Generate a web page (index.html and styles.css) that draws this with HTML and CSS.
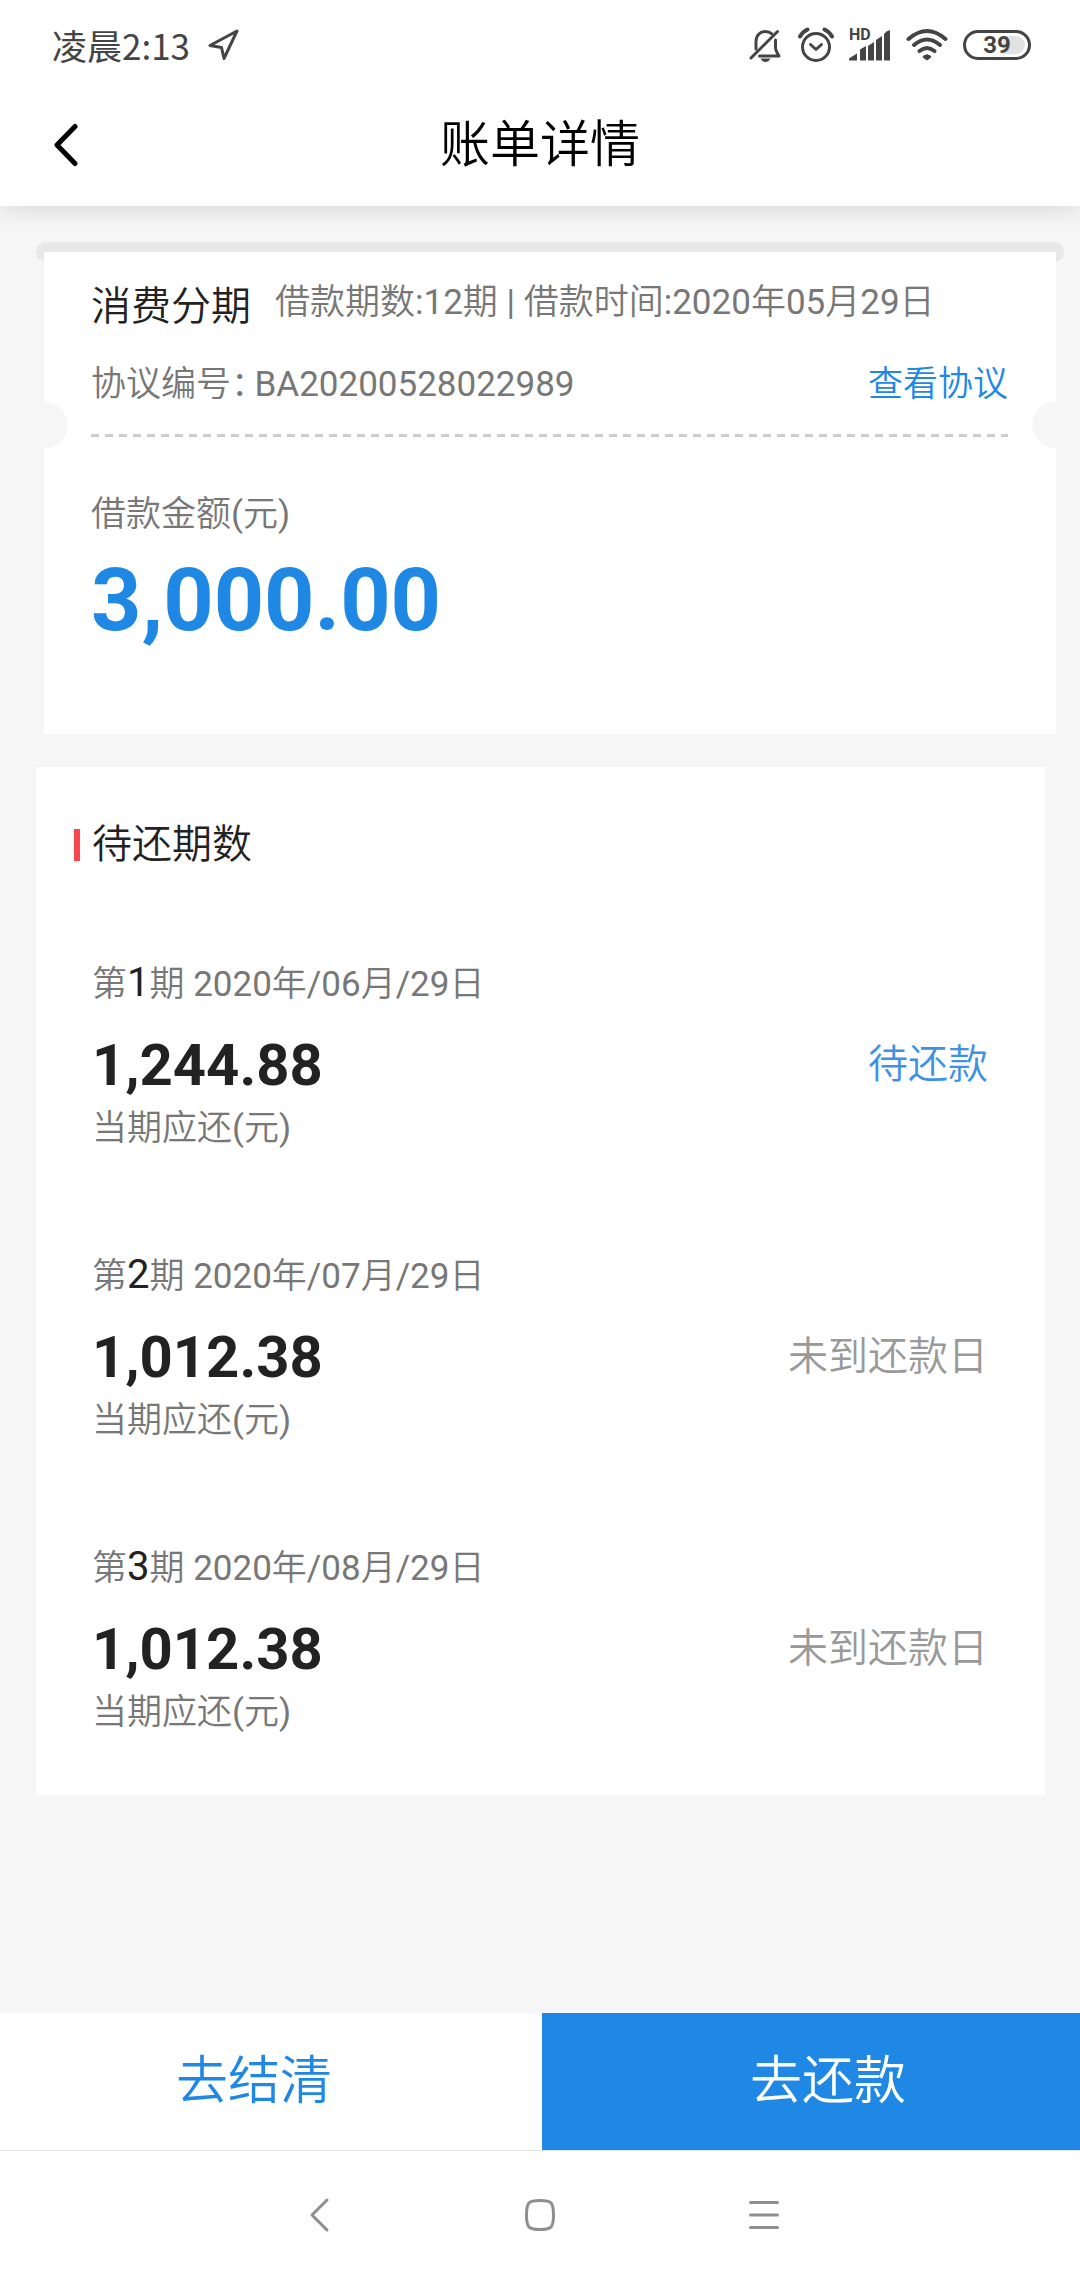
FILE: index.html
```html
<!DOCTYPE html>
<html lang="zh-CN">
<head>
<meta charset="utf-8">
<meta name="viewport" content="width=device-width, initial-scale=1">
<title>账单详情</title>
<link rel="stylesheet" href="styles.css">
</head>
<body>
<header class="header">
  <div class="status-bar">
    <div class="status-left">
      <span class="clock">凌晨2:13</span>
      <svg class="icon" width="32" height="32" viewBox="0 0 32 32" fill="none" stroke="#444" stroke-width="3" stroke-linejoin="round"><path d="M29 2 2 16.500 13.500 18.500 16 29.500Z"/></svg>
    </div>
    <div class="status-right">
      <svg class="icon" width="34" height="36" viewBox="0 0 34 36" fill="none" stroke="#444" stroke-width="3" stroke-linecap="round" stroke-linejoin="round">
        <path d="M7 22V14.500C7 8.500 11 4.500 16.500 4.500c2.500 0 4.500.800 6 2.200"/><path d="M26.500 13v7.500c0 3 1 4.500 3.500 8.500H10.500"/><path d="M2 31 28.500 4.500"/><path d="M11.500 31.500h10q-2 3.500-5 3.500t-5-3.500Z" fill="#444" stroke="none"/>
      </svg>
      <svg class="icon" width="36" height="36" viewBox="0 0 36 36" fill="none" stroke="#444" stroke-width="3" stroke-linecap="round" stroke-linejoin="round">
        <circle cx="18" cy="20" r="13.500"/><path d="M12.500 17.500 18 22.500 23.500 17.500"/><path d="M2 9.500Q5 4.500 9.500 2.500" stroke-width="4"/><path d="M34 9.500Q31 4.500 26.500 2.500" stroke-width="4"/>
      </svg>
      <div class="signal">
        <span class="signal-hd">HD</span>
        <svg class="icon" width="42" height="36" viewBox="0 0 42 36" fill="#444"><path d="M0 33.500v-2l8-5v7Z"/><path d="M11 33.500V22.500l6-3.500v14.500Z"/><path d="M19 33.500V19l6-4v18.500Z"/><path d="M27 33.500V13l6-4v24.500Z"/><path d="M35 33.500V7q2-3 6-4v30.500Z"/></svg>
      </div>
      <svg class="icon" width="42" height="34" viewBox="0 0 42 34" fill="none" stroke="#444" stroke-width="4" stroke-linecap="round"><path d="M2.500 11Q21-5 39.500 11"/><path d="M8 17Q21 6 34 17"/><path d="M13.500 23Q21 17 28.500 23"/><path d="M17.500 28q3.500-2.500 7 0v1.500L21 32l-3.500-2.500Z" fill="#444" stroke-width="1"/></svg>
      <div class="battery">39</div>
    </div>
  </div>
  <div class="title-bar">
    <button class="back" type="button" aria-label="返回"><svg class="icon" width="26" height="44" viewBox="0 0 26 44" fill="none" stroke="#000" stroke-width="5" stroke-linecap="round" stroke-linejoin="round"><path d="M23 3.500 5 22 23 40.500"/></svg></button>
    <h1 class="title">账单详情</h1>
  </div>
</header>

<main class="main">
  <div class="slot"></div>
  <section class="loan">
    <div class="loan-head">
      <h2 class="heading">消费分期</h2>
      <p class="text">借款期数:12期 | 借款时间:2020年05月29日</p>
    </div>
    <div class="loan-agreement">
      <p class="text agreement-no"><span class="label">协议编号：</span><span>BA20200528022989</span></p>
      <a class="link" href="#agreement">查看协议</a>
    </div>
    <div class="divider"></div>
    <p class="text">借款金额(元)</p>
    <p class="loan-amount">3,000.00</p>
  </section>

  <section class="plan">
    <h2 class="heading plan-title">待还期数</h2>
    <ul class="plan-list">
      <li class="item">
        <p class="text">第<span class="no">1</span>期 2020年/06月/29日</p>
        <div class="item-row"><strong class="amount">1,244.88</strong><span class="state state-due">待还款</span></div>
        <p class="text">当期应还(元)</p>
      </li>
      <li class="item">
        <p class="text">第<span class="no">2</span>期 2020年/07月/29日</p>
        <div class="item-row"><strong class="amount">1,012.38</strong><span class="state">未到还款日</span></div>
        <p class="text">当期应还(元)</p>
      </li>
      <li class="item">
        <p class="text">第<span class="no">3</span>期 2020年/08月/29日</p>
        <div class="item-row"><strong class="amount">1,012.38</strong><span class="state">未到还款日</span></div>
        <p class="text">当期应还(元)</p>
      </li>
    </ul>
  </section>
</main>

<footer class="footer">
  <div class="actions">
    <button class="action action-settle" type="button">去结清</button>
    <button class="action action-repay" type="button">去还款</button>
  </div>
  <nav class="system-nav">
    <button class="nav-button" type="button" aria-label="后退"><svg class="icon" width="32" height="36" viewBox="0 0 32 36" fill="none" stroke="#8e8e8e" stroke-width="3" stroke-linecap="round" stroke-linejoin="round"><path d="M27 3 12 18 27 33"/></svg></button>
    <button class="nav-button" type="button" aria-label="主屏幕"><svg class="icon" width="32" height="36" viewBox="0 0 32 36" fill="none" stroke="#8e8e8e" stroke-width="3"><path d="M16 3.500C27 3.500 29.500 5 29.500 18S27 32.500 16 32.500 2.500 31 2.500 18 5 3.500 16 3.500Z"/></svg></button>
    <button class="nav-button" type="button" aria-label="最近任务"><svg class="icon" width="32" height="36" viewBox="0 0 32 36" fill="none" stroke="#8e8e8e" stroke-width="3" stroke-linecap="round"><path d="M2.500 5.500h27M2.500 18h27M2.500 30.500h27"/></svg></button>
  </nav>
</footer>
</body>
</html>
```
FILE: styles.css
```css
* {
  box-sizing: border-box;
  margin: 0;
  padding: 0;
}

body {
  display: flex;
  flex-direction: column;
  min-height: 100vh;
  background: #f6f6f6;
  color: #222;
  font-family: Roboto, "Noto Sans CJK SC DemiLight", "Noto Sans CJK SC", sans-serif;
  font-weight: 400;
}

button {
  border: 0;
  background: none;
  font: inherit;
}

.icon {
  display: block;
}

/* Header */
.header {
  background: #fff;
  box-shadow: 0 4px 24px rgba(0, 0, 0, 0.12);
}

.status-bar {
  display: flex;
  align-items: center;
  justify-content: space-between;
  height: 84px;
  padding: 5px 49px 0 52px;
  color: #444;
}

.status-left {
  display: flex;
  align-items: center;
  gap: 18px;
}

.status-right {
  display: flex;
  align-items: center;
  gap: 15px;
}

.clock {
  font-family: "Noto Sans CJK SC", sans-serif;
  font-size: 35px;
  line-height: 52px;
}

.signal {
  position: relative;
}

.signal-hd {
  position: absolute;
  top: 0;
  left: 0;
  font-size: 16px;
  line-height: 16px;
  font-weight: 700;
}

.battery {
  width: 68px;
  height: 30px;
  border: 3px solid #444;
  border-radius: 15px;
  box-shadow: inset 0 0 0 3px #fff;
  background: linear-gradient(90deg, #fff 60%, #e2e2e2 60%);
  font-size: 24px;
  line-height: 24px;
  font-weight: 700;
  text-align: center;
}

.title-bar {
  display: grid;
  grid-template-columns: 1fr auto 1fr;
  align-items: center;
  height: 122px;
  color: #000;
}

.back {
  justify-self: start;
  padding: 16px 52px;
}

.title {
  font-size: 50px;
  line-height: 60px;
  font-weight: 400;
}

/* Content */
.main {
  flex: 1;
  padding: 36px 0;
}

.slot {
  height: 20px;
  margin: 0 16px 0 36px;
  border-radius: 10px;
  background: #e8e8e8;
}

.heading {
  font-size: 40px;
  line-height: 60px;
  font-weight: 400;
}

.text,
.link {
  font-size: 35px;
  line-height: 52px;
}

.text {
  color: #777;
}

.link,
.action-settle {
  color: #1f88e5;
}

.link {
  text-decoration: none;
}

.loan {
  position: relative;
  margin: -10px 24px 0 44px;
  padding: 25px 48px 76px 47px;
  background:
    radial-gradient(circle at 0 173px, #f6f6f6 23px, transparent 24px),
    radial-gradient(circle at 100% 173px, #f6f6f6 23px, transparent 24px),
    #fff;
}

.loan-head {
  display: flex;
  gap: 24px;
}

.loan-agreement {
  display: flex;
  justify-content: space-between;
  margin-top: 22px;
}

.agreement-no {
  display: flex;
  gap: 6px;
}

.label {
  font-feature-settings: "halt";
}

.divider {
  height: 3px;
  margin: 23px 0 52px;
  background: repeating-linear-gradient(90deg, #ccc 0 8px, transparent 8px 14px);
}

.loan-amount {
  color: #1f88e5;
  font-size: 88px;
  line-height: 117px;
  font-weight: 700;
}

.plan {
  margin: 33px 35px 0 36px;
  padding: 48px 57px 56px 38px;
  background: #fff;
}

.plan-title {
  display: flex;
  align-items: center;
  gap: 12px;
}

.plan-title::before {
  content: "";
  width: 6px;
  height: 32px;
  background: #fb4650;
}

.plan-list {
  display: grid;
  gap: 94px;
  padding: 82px 0 0 18px;
  list-style: none;
}

.no {
  color: #222;
  font-size: 40px;
}

.item-row {
  display: flex;
  align-items: center;
  justify-content: space-between;
  margin-top: 16px;
}

.amount {
  font-size: 58px;
  line-height: 76px;
  font-weight: 700;
}

.state {
  color: #999;
  font-size: 40px;
  line-height: 60px;
}

.state-due {
  color: #3f91e5;
}

/* Bottom actions and system navigation */
.footer {
  background: #fff;
}

.actions {
  display: grid;
  grid-template-columns: 271fr 269fr;
  border-bottom: 1px solid #e4e4e4;
}

.action {
  font-size: 52px;
  line-height: 137px;
}

.action-settle {
  padding-right: 34px;
}

.action-repay {
  padding-left: 34px;
  background: #1f88e5;
  color: #fff;
}

.system-nav {
  display: flex;
  justify-content: center;
  gap: 192px;
  padding: 46px 0 47px;
}
```
